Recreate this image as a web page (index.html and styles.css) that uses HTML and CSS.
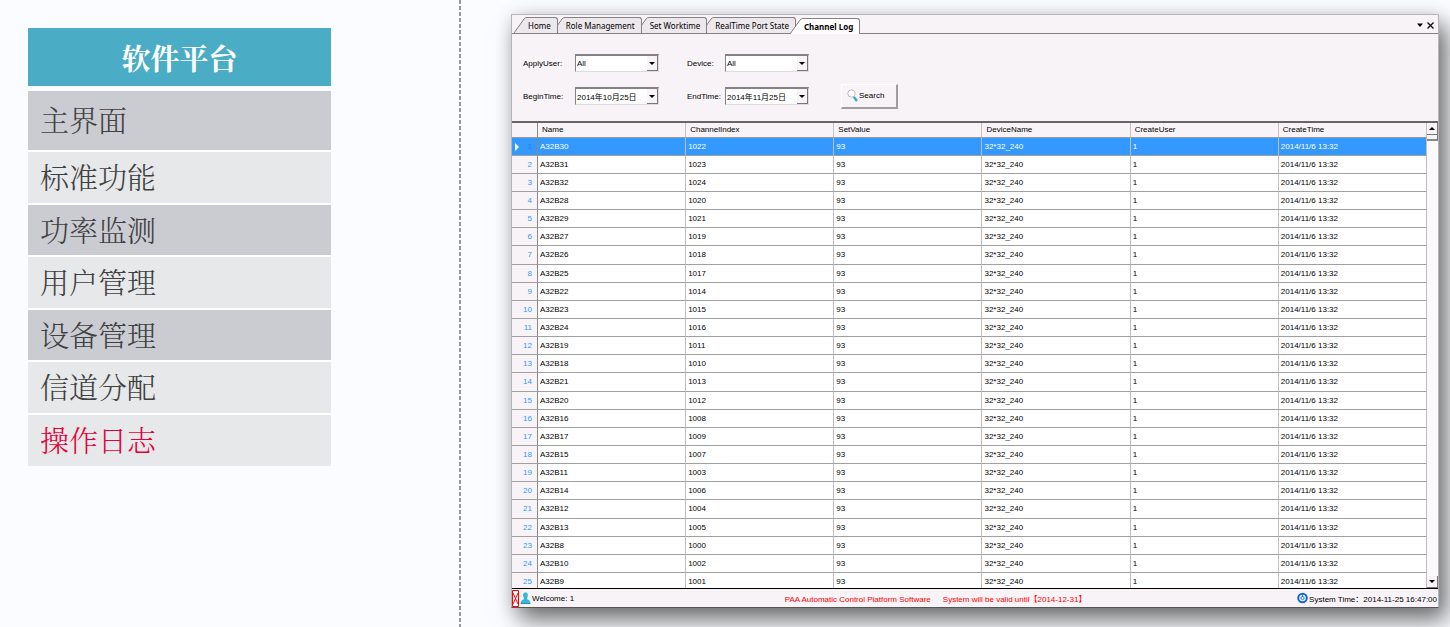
FILE: index.html
```html
<!DOCTYPE html>
<html lang="zh-CN">
<head>
    <meta charset="UTF-8">
    <meta name="viewport" content="width=device-width, initial-scale=1.0">
    <title>软件平台</title>
    <link rel="stylesheet" href="styles.css">
</head>
<body>
    <aside class="sidebar">
        <h1 class="sidebar-title">软件平台</h1>
        <nav class="menu">
            <a class="menu-item first dark" href="#">主界面</a>
            <a class="menu-item" href="#">标准功能</a>
            <a class="menu-item dark" href="#">功率监测</a>
            <a class="menu-item" href="#">用户管理</a>
            <a class="menu-item dark" href="#">设备管理</a>
            <a class="menu-item" href="#">信道分配</a>
            <a class="menu-item active" href="#">操作日志</a>
        </nav>
    </aside>

    <main class="content">
        <div class="window">
            <div class="tabs">
                <button class="tab"><svg class="slope" viewBox="0 0 13 16"><path d="M0 16L10 2Q11 .5 13 .5V16Z"/><path class="edge" d="M0 16L10 2Q11 .5 13 .5"/></svg><span>Home</span></button>
                <button class="tab"><svg class="slope" viewBox="0 0 13 16"><path d="M0 16L10 2Q11 .5 13 .5V16Z"/><path class="edge" d="M0 16L10 2Q11 .5 13 .5"/></svg><span>Role Management</span></button>
                <button class="tab"><svg class="slope" viewBox="0 0 13 16"><path d="M0 16L10 2Q11 .5 13 .5V16Z"/><path class="edge" d="M0 16L10 2Q11 .5 13 .5"/></svg><span>Set Worktime</span></button>
                <button class="tab"><svg class="slope" viewBox="0 0 13 16"><path d="M0 16L10 2Q11 .5 13 .5V16Z"/><path class="edge" d="M0 16L10 2Q11 .5 13 .5"/></svg><span>RealTime Port State</span></button>
                <button class="tab current"><svg class="slope" viewBox="0 0 13 16"><path d="M0 16L10 2Q11 .5 13 .5V16Z"/><path class="edge" d="M0 16L10 2Q11 .5 13 .5"/></svg><span>Channel Log</span></button>
                <div class="tab-tools">
                    <button class="tool" aria-label="Tab list"><svg width="6" height="4" viewBox="0 0 6 4"><path d="M0 .5H6L3 4Z"/></svg></button>
                    <button class="tool" aria-label="Close"><svg width="7" height="7" viewBox="0 0 7 7"><path d="M.5 .5L6.5 6.5M6.5 .5L.5 6.5" fill="none" stroke="#111" stroke-width="1.3"/></svg></button>
                </div>
            </div>

            <form class="filters">
                <label for="user">ApplyUser:</label>
                <div class="field">
                    <select id="user"><option>All</option></select>
                    <span class="arrow"></span>
                </div>
                <label for="device">Device:</label>
                <div class="field">
                    <select id="device"><option>All</option></select>
                    <span class="arrow"></span>
                </div>
                <label class="row-start" for="begin">BeginTime:</label>
                <div class="field">
                    <input id="begin" type="text" value="2014年10月25日">
                    <button class="arrow" type="button" aria-label="Pick begin date"></button>
                </div>
                <label for="end">EndTime:</label>
                <div class="field">
                    <input id="end" type="text" value="2014年11月25日">
                    <button class="arrow" type="button" aria-label="Pick end date"></button>
                </div>
                <button class="search" type="button">
                    <svg width="11" height="13" viewBox="0 0 11 13"><circle cx="4.5" cy="4.5" r="3.7" fill="#fff" stroke="#bbb"/><path d="M6.8 8L10 12" stroke="#2fa9cf" stroke-width="2.4"/></svg>
                    Search
                </button>
            </form>

            <div class="grid">
                <div class="grid-body">
                    <table>
                        <thead>
                            <tr>
                                <th class="num"></th>
                                <th>Name</th>
                                <th>ChannelIndex</th>
                                <th>SetValue</th>
                                <th>DeviceName</th>
                                <th>CreateUser</th>
                                <th>CreateTime</th>
                            </tr>
                        </thead>
                        <tbody id="rows"></tbody>
                    </table>
                </div>
                <div class="scrollbar">
                    <button class="scroll-btn up" aria-label="Scroll up"></button>
                    <div class="thumb"></div>
                    <button class="scroll-btn down" aria-label="Scroll down"></button>
                </div>
            </div>

            <footer class="status">
                <div class="status-left">
                    <svg width="7" height="17" viewBox="0 0 7 17"><path d="M.5 .5H6.5V16.5H.5Z" fill="#fff" stroke="#f00"/><path d="M1 3L6 14M6 3L1 14" stroke="#f00" fill="none"/></svg>
                    <svg width="11" height="13" viewBox="0 0 11 13"><path d="M5.5 .5C8 .5 8.3 3 7.5 5C7 6.5 7 7 7.5 7.5C9.5 8.2 10.5 9 10.5 12H.5C.5 9 1.5 8.2 3.5 7.5C4 7 4 6.5 3.5 5C2.7 3 3 .5 5.5 .5Z" fill="#35b8d8"/><path d="M1 11.5H10" stroke="#1b93b8"/></svg>
                    <span>Welcome: 1</span>
                </div>
                <div class="status-center">
                    <span>PAA Automatic Control Platform Software</span>
                    <span>System will be valid until【2014-12-31】</span>
                </div>
                <div class="status-right">
                    <svg width="11" height="12" viewBox="0 0 11 12"><circle cx="5.5" cy="6" r="4.3" fill="#e8f3ff" stroke="#1766d0" stroke-width="2"/><circle cx="5.5" cy="6" r="1.6" fill="none" stroke="#2f7fe0"/><path d="M5.5 3V5" stroke="#2f7fe0"/></svg>
                    <span>System Time：2014-11-25 16:47:00</span>
                </div>
            </footer>
        </div>
    </main>

    <script>
        const channels = [
            ['A32B30', 1022], ['A32B31', 1023], ['A32B32', 1024], ['A32B28', 1020], ['A32B29', 1021],
            ['A32B27', 1019], ['A32B26', 1018], ['A32B25', 1017], ['A32B22', 1014], ['A32B23', 1015],
            ['A32B24', 1016], ['A32B19', 1011], ['A32B18', 1010], ['A32B21', 1013], ['A32B20', 1012],
            ['A32B16', 1008], ['A32B17', 1009], ['A32B15', 1007], ['A32B11', 1003], ['A32B14', 1006],
            ['A32B12', 1004], ['A32B13', 1005], ['A32B8', 1000], ['A32B10', 1002], ['A32B9', 1001]
        ];

        document.getElementById('rows').innerHTML = channels.map(([name, index], i) => `
            <tr${i === 0 ? ' class="selected"' : ''}>
                <td class="num">${i + 1}</td>
                <td>${name}</td>
                <td>${index}</td>
                <td>93</td>
                <td>32*32_240</td>
                <td>1</td>
                <td>2014/11/6 13:32</td>
            </tr>`).join('');
    </script>
</body>
</html>
```
FILE: styles.css
```css
* {
    box-sizing: border-box;
    margin: 0;
    padding: 0;
}

body {
    display: flex;
    min-height: 100vh;
    background: #fafcff;
    font-family: 'Liberation Sans', 'Noto Sans CJK SC', sans-serif;
    font-size: 8px;
    color: #000;
    overflow: hidden;
}

button, input, select {
    font: inherit;
    color: inherit;
    border: none;
    border-radius: 0;
    background: none;
    appearance: none;
}

/* Left menu */
.sidebar {
    width: 461px;
    flex-shrink: 0;
    padding: 28px 130px 0 28px;
    background: repeating-linear-gradient(#999 0 4px, transparent 4px 6px) right top / 2px 100% no-repeat;
    font-family: 'Noto Serif CJK SC', 'Noto Sans CJK SC', serif;
}

.sidebar-title {
    height: 58px;
    margin-bottom: 5px;
    background: #4bacc6;
    color: #fff;
    font-size: 29px;
    line-height: 60px;
    text-align: center;
}

.menu {
    display: flex;
    flex-direction: column;
    gap: 2px;
    background: #fff;
}

.menu-item {
    height: 51px;
    padding-left: 12px;
    background: #e6e8e9;
    color: #404040;
    font-size: 29px;
    font-weight: 300;
    line-height: 50px;
    text-decoration: none;
}

.menu-item.dark {
    height: 50px;
    background: #cbccd2;
}

.menu-item.first {
    height: 59px;
    line-height: 58px;
}

.menu-item.active {
    color: #e4003c;
}

/* Application window */
.content {
    flex: 1;
    min-width: 0;
    padding: 14px 11px 19px 50px;
}

.window {
    display: flex;
    flex-direction: column;
    height: calc(100vh - 33px);
    background: #f7f3f7;
    border: 1px solid #b8b4b8;
    border-bottom-color: #555;
    box-shadow: 8px 12px 22px rgba(0, 0, 0, 0.55), 0 0 16px rgba(0, 0, 0, 0.1);
}

.tabs {
    display: flex;
    align-items: flex-end;
    height: 19px;
    padding-left: 2px;
    border-bottom: 1px solid #848284;
    font-family: 'Noto Sans', sans-serif;
}

.tab {
    position: relative;
    display: flex;
    height: 16px;
    line-height: 15px;
    margin-right: -6px;
}

.tab span {
    padding: 0 6px 0 1px;
    border-top: 1px solid #848284;
    border-right: 1px solid #848284;
    border-top-right-radius: 3px;
    background: #ece8ec;
}

.slope {
    width: 13px;
    height: 16px;
    fill: #ece8ec;
}

.slope .edge {
    fill: none;
    stroke: #848284;
}

/* each tab lies over the one to its right */
.tab:nth-child(1) { z-index: 4; }
.tab:nth-child(2) { z-index: 3; }
.tab:nth-child(3) { z-index: 2; }
.tab:nth-child(4) { z-index: 1; }

.tab.current {
    z-index: 5;
    margin-bottom: -1px;
    font-weight: 700;
}

.tab.current span {
    background: #fff;
}

.tab.current .slope {
    fill: #fff;
}

.tab-tools {
    display: flex;
    align-items: center;
    gap: 4px;
    height: 16px;
    margin-left: auto;
    padding-right: 4px;
}

.tool {
    display: flex;
}

.filters {
    display: grid;
    grid-template-columns: 52px 112px 38px 116px 57px;
    grid-template-rows: 18px 24px;
    row-gap: 12px;
    align-items: center;
    height: 87px;
    padding: 20px 0 0 11px;
}

.filters label {
    white-space: nowrap;
}

.row-start {
    grid-column: 1;
}

.field {
    display: flex;
    width: 84px;
    height: 18px;
    background: #fff;
    border: 1px solid #848284;
    border-top-width: 2px;
    border-right-color: #ddd;
    border-bottom-color: #ddd;
}

.field select, .field input {
    flex: 1;
    min-width: 0;
    padding-left: 1px;
}

.arrow {
    display: flex;
    align-items: center;
    justify-content: center;
    width: 11px;
    background: #f7f3f7;
    border-right: 1px solid #777;
    border-bottom: 1px solid #777;
    pointer-events: none;
}

.arrow::before {
    content: "";
    border: 3px solid transparent;
    border-top-color: #000;
    border-bottom: none;
}

.search {
    display: flex;
    align-items: center;
    gap: 1px;
    height: 25px;
    padding-left: 5px;
    border: 1px solid #fff;
    border-right: 2px solid #a09ca0;
    border-bottom: 2px solid #a09ca0;
}

/* Log table */
.grid {
    display: flex;
    flex: 1;
    min-height: 0;
    border-top: 2px solid #666;
    border-bottom: 1px solid #000;
}

.grid-body {
    flex: 1;
    overflow: hidden;
}

table {
    width: 100%;
    table-layout: fixed;
    border-collapse: separate;
    border-spacing: 0;
}

th {
    height: 15px;
    padding-left: 4px;
    border-right: 1px solid #c4c0c4;
    border-bottom: 1px solid #999;
    font-weight: 400;
    text-align: left;
    line-height: 12px;
}

td {
    height: 18px;
    padding-left: 2px;
    background: #fff;
    border-right: 1px solid #c0bdc0;
    border-bottom: 1px solid #a0a0a0;
    line-height: 12px;
}

tr:nth-child(7n) td {
    height: 19px;
}

.num {
    width: 26px;
    padding-right: 5px;
    border-right-color: #888;
    text-align: right;
}

td.num {
    position: relative;
    background: #f7f3f7;
    color: #3399ff;
}

.selected td {
    background: #3399ff;
    color: #fff;
}

.selected td.num {
    background: #3399ff;
    color: #1e88f0;
}

.selected .num::before {
    content: "";
    position: absolute;
    left: 3px;
    top: 5px;
    border: 4px solid transparent;
    border-left-color: #fff;
    border-right: none;
}

.scrollbar {
    display: flex;
    flex-direction: column;
    width: 11px;
    background: #fbf9fb;
}

.scroll-btn {
    display: flex;
    align-items: center;
    justify-content: center;
    height: 12px;
    background: #f7f3f7;
    border-right: 1px solid #777;
    border-bottom: 1px solid #777;
}

.scroll-btn::before {
    content: "";
    border: 3px solid transparent;
}

.up::before {
    border-bottom-color: #000;
    border-top: none;
}

.down {
    margin-top: auto;
}

.down::before {
    border-top-color: #000;
    border-bottom: none;
}

.thumb {
    height: 6px;
    background: #f7f3f7;
    border-right: 1px solid #777;
    border-bottom: 2px solid #888;
}

/* Status bar */
.status {
    display: flex;
    align-items: center;
    height: 18px;
    white-space: nowrap;
}

.status-left, .status-right {
    display: flex;
    align-items: center;
    gap: 1px;
}

.status-left {
    flex: 7 0 0;
}

.status-right {
    flex: 9 0 0;
    justify-content: flex-end;
    padding-right: 1px;
}

.status-center {
    display: flex;
    align-items: baseline;
    gap: 12px;
    color: #f00;
}
```
